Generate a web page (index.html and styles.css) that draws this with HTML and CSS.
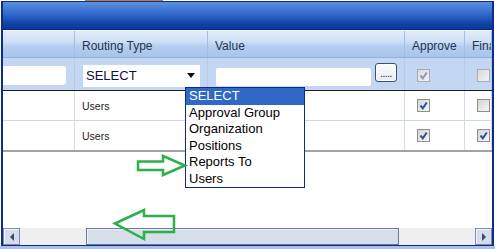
FILE: index.html
```html
<!DOCTYPE html>
<html lang="en">
<head>
    <meta charset="UTF-8">
    <meta name="viewport" content="width=device-width, initial-scale=1.0">
    <title>Approval Routing</title>
    <link rel="stylesheet" href="styles.css">
</head>
<body>
    <div class="top-strip"><span class="tab-edge"></span></div>

    <div class="window">
        <div class="titlebar"></div>

        <div class="row grid-head">
            <div class="cell"></div>
            <div class="cell">Routing Type</div>
            <div class="cell">Value</div>
            <div class="cell">Approve</div>
            <div class="cell">Final</div>
        </div>

        <div class="row filter">
            <div class="cell"><span class="field field-first"></span></div>
            <div class="cell">
                <div class="select">SELECT<span class="caret"></span></div>
            </div>
            <div class="cell">
                <span class="field field-value"></span>
                <button class="ellipsis">.....</button>
            </div>
            <div class="cell">
                <span class="cb disabled"><svg viewBox="0 0 11 11"><path d="M2.5 5.5 L4.8 8.3 L8.8 2.5"/></svg></span>
            </div>
            <div class="cell"><span class="cb disabled"></span></div>
        </div>

        <div class="row data">
            <div class="cell"></div>
            <div class="cell">Users</div>
            <div class="cell"></div>
            <div class="cell">
                <span class="cb"><svg viewBox="0 0 11 11"><path d="M2.5 5.5 L4.8 8.3 L8.8 2.5"/></svg></span>
            </div>
            <div class="cell"><span class="cb"></span></div>
        </div>

        <div class="row data last">
            <div class="cell"></div>
            <div class="cell">Users</div>
            <div class="cell"></div>
            <div class="cell">
                <span class="cb"><svg viewBox="0 0 11 11"><path d="M2.5 5.5 L4.8 8.3 L8.8 2.5"/></svg></span>
            </div>
            <div class="cell">
                <span class="cb"><svg viewBox="0 0 11 11"><path d="M2.5 5.5 L4.8 8.3 L8.8 2.5"/></svg></span>
            </div>
        </div>

        <div class="empty"></div>

        <div class="hscroll">
            <span class="sb-btn"><span class="arrow-left"></span></span>
            <div class="sb-track"><span class="sb-thumb"></span></div>
            <span class="sb-btn"><span class="arrow-right"></span></span>
        </div>

        <!-- open routing type list -->
        <ul class="dropdown">
            <li class="selected">SELECT</li>
            <li>Approval Group</li>
            <li>Organization</li>
            <li>Positions</li>
            <li>Reports To</li>
            <li>Users</li>
        </ul>
    </div>

    <div class="bottom-strip"></div>

    <!-- green callout arrows drawn over the screenshot -->
    <svg class="annotations" viewBox="0 0 495 249">
        <polygon points="138,161.5 163,161.5 163,156 185,165.5 163,175 163,170 138,170"/>
        <polygon points="115,223.5 144,210 144,216 174,216 174,232 144,232 144,239"/>
    </svg>
</body>
</html>
```

FILE: styles.css
```css
body {
    margin: 0;
    width: 495px;
    height: 249px;
    overflow: hidden;
    background: #fff;
    font-family: "Liberation Sans", Arial, sans-serif;
    position: relative;
}

.top-strip {
    height: 1px;
    display: flex;
}

.tab-edge {
    margin-left: 85px;
    width: 78px;
    background: #c77c30;
}

.window {
    position: relative;
    margin-left: 1px;
    width: 493px;
    height: 245px;
    box-sizing: border-box;
    border: 2px solid #0b2e8e;
    border-top-width: 1px;
    border-bottom-width: 1px;
    display: flex;
    flex-direction: column;
}

.titlebar {
    height: 27px;
    flex: none;
    background: linear-gradient(#5c8fe0, #3169cc 45%, #1446ac 75%, #0a3597);
    border-bottom: 1px solid #0a2c86;
}

.row {
    display: grid;
    grid-template-columns: 72px 133px 197px 60px 27px;
    flex: none;
    overflow: hidden;
}

.cell {
    display: flex;
    align-items: flex-start;
    padding-left: 7px;
    white-space: nowrap;
    overflow: hidden;
    box-sizing: border-box;
}

.grid-head {
    height: 28px;
    box-sizing: border-box;
    border-top: 1px solid #eef4fc;
    border-bottom: 1px solid #92b0dc;
    background: linear-gradient(#e2ecfa, #cfdff5 40%, #b4cdef 60%, #a9c5ec);
}

.grid-head .cell {
    padding-top: 8px;
    font-size: 12px;
    line-height: 14px;
    color: #26344c;
    border-right: 1px solid #a3bde3;
}

.filter {
    height: 33px;
    box-sizing: border-box;
    background: #c3d7f3;
    border-bottom: 1px solid #1e1e1e;
}

.filter .cell {
    border-right: 1px solid #b5cbe9;
}

.filter .cell:first-child {
    padding-left: 0;
}

.field {
    display: block;
    background: #fff;
}

.field-first {
    margin-top: 8px;
    width: 63px;
    height: 19px;
    border-radius: 0 3px 3px 0;
}

.select {
    margin-top: 7px;
    margin-left: 1px;
    width: 117px;
    height: 22px;
    background: #fff;
    font-size: 13px;
    line-height: 22px;
    padding-left: 3px;
    box-sizing: border-box;
    color: #10103a;
    position: relative;
}

.caret {
    position: absolute;
    left: 104px;
    top: 8px;
    width: 0;
    height: 0;
    border-left: 4px solid transparent;
    border-right: 4px solid transparent;
    border-top: 5px solid #111;
}

.field-value {
    margin-top: 10px;
    margin-left: 1px;
    width: 155px;
    height: 18px;
    border-radius: 2px;
}

.ellipsis {
    margin-top: 5px;
    margin-left: 4px;
    width: 22px;
    height: 19px;
    padding: 0 0 3px;
    border: 1px solid #34527f;
    border-radius: 3px;
    background: linear-gradient(#fbfcfd, #e6ebf2);
    box-shadow: inset 0 0 0 1px #fff;
    font-family: "Liberation Sans", Arial, sans-serif;
    font-size: 10px;
    line-height: 8px;
    letter-spacing: -0.5px;
    color: #222;
    display: flex;
    align-items: flex-end;
    justify-content: center;
}

.cb {
    display: block;
    width: 13px;
    height: 13px;
    margin-left: 5px;
    box-sizing: border-box;
    border: 1px solid #8e8f8f;
    background: linear-gradient(135deg, #d4d4d4, #f6f6f6);
}

.cb svg {
    display: block;
    width: 11px;
    height: 11px;
    fill: none;
    stroke: #2e4f9e;
    stroke-width: 2;
}

.filter .cb {
    margin-top: 11px;
}

.cb.disabled {
    border-color: #a8abb0;
    background: linear-gradient(135deg, #dcdcdc, #f2f2f2);
}

.cb.disabled svg {
    stroke: #8a9aba;
}

.data {
    height: 30px;
    box-sizing: border-box;
    background: #fff;
    border-bottom: 1px solid #cdd7e8;
}

.data.last {
    height: 31px;
    border-bottom: 2px solid #a2a2a2;
}

.data .cell {
    padding-top: 9px;
    font-size: 10.5px;
    line-height: 13px;
    color: #1a1a1a;
    border-right: 1px solid #d3dbea;
}

.data .cb {
    margin-top: -1px;
}

.empty {
    flex: 1;
    background: #fff;
}

.hscroll {
    height: 17px;
    flex: none;
    display: flex;
    background: #efefef;
}

.sb-btn {
    width: 17px;
    height: 17px;
    box-sizing: border-box;
    border: 1px solid #7d8cab;
    background: #d6dde8;
    box-shadow: inset 1px 1px 0 #f3f6fa;
    display: flex;
    align-items: center;
    justify-content: center;
}

.arrow-left {
    border-top: 4px solid transparent;
    border-bottom: 4px solid transparent;
    border-right: 4px solid #3c4a68;
}

.arrow-right {
    border-top: 4px solid transparent;
    border-bottom: 4px solid transparent;
    border-left: 4px solid #3c4a68;
}

.sb-track {
    flex: 1;
    display: flex;
}

.sb-thumb {
    margin-left: 66px;
    width: 313px;
    box-sizing: border-box;
    border: 1px solid #6a7b9c;
    background: #d6dee9;
    box-shadow: inset 1px 1px 0 #eef2f7;
}

.dropdown {
    position: absolute;
    left: 182px;
    top: 85px;
    width: 120px;
    margin: 0;
    padding: 0;
    list-style: none;
    box-sizing: border-box;
    border: 1px solid #0a2a8c;
    background: #fff;
    font-size: 13px;
    line-height: 16.5px;
    color: #000;
}

.dropdown li {
    padding-left: 3px;
}

.dropdown .selected {
    background: #3068c6;
    color: #fff;
}

.bottom-strip {
    height: 3px;
    background: #a9c1e8;
}

.annotations {
    position: absolute;
    left: 0;
    top: 0;
    width: 495px;
    height: 249px;
    pointer-events: none;
}

.annotations polygon {
    fill: none;
    stroke: #2bb04a;
    stroke-width: 2.5;
    stroke-linejoin: miter;
}
```
